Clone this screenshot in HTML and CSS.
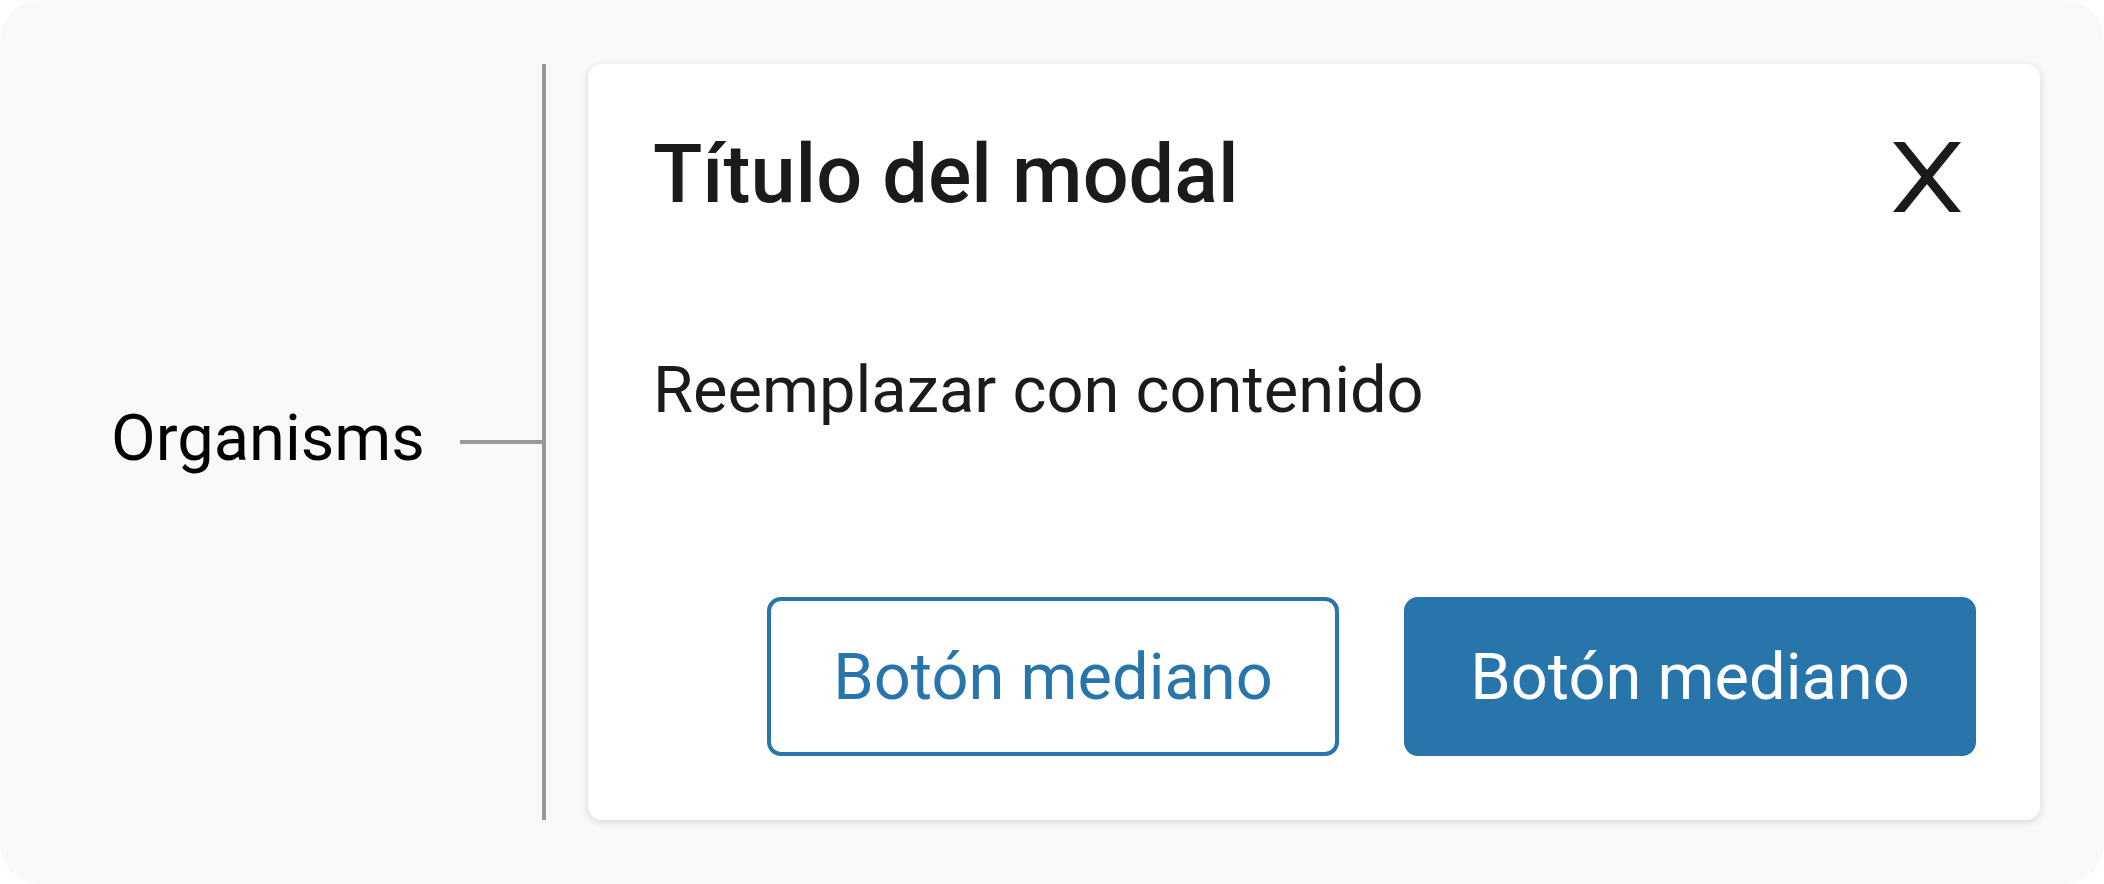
FILE: index.html
```html
<!DOCTYPE html>
<html lang="es">
<head>
	<meta charset="UTF-8">
	<title>Organisms - Modal</title>
	<link rel="stylesheet" href="styles.css">
</head>
<body>
	<div class="panel">
		<div class="label">Organisms</div>
		<div class="connector"></div>
		<div class="rail"></div>

		<div class="modal">
			<div class="modal-header">
				<h1 class="modal-title">Título del modal</h1>
				<button class="modal-close" type="button" aria-label="Cerrar">
					<svg width="68" height="70" viewBox="0 0 68 70">
						<polygon points="0,0 11.5,0 68,70 56.5,70" fill="#1b1b1b"/>
						<polygon points="56.5,0 68,0 11.5,70 0,70" fill="#1b1b1b"/>
					</svg>
				</button>
			</div>

			<p class="modal-body">Reemplazar con contenido</p>

			<div class="modal-footer">
				<button class="btn btn-outline" type="button">Botón mediano</button>
				<button class="btn btn-solid" type="button">Botón mediano</button>
			</div>
		</div>
	</div>
</body>
</html>
```

FILE: styles.css
```css
html, body {
	margin: 0;
	padding: 0;
	background-color: #ffffff;
}

body {
	font-family: Roboto, "Liberation Sans", sans-serif;
}

.panel {
	width: 2104px;
	height: 884px;
	box-sizing: border-box;
	padding: 64px 64px 64px 111px;
	background-color: #f9f9f9;
	border-radius: 40px;
	display: flex;
	align-items: center;
}

.label {
	width: 313px;
	margin-right: 36px;
	font-size: 65px;
	line-height: 76px;
	color: #000000;
	margin-top: -9px;
}

.connector {
	width: 82px;
	height: 4px;
	background-color: #999999;
}

.rail {
	width: 4px;
	height: 756px;
	background-color: #999999;
	margin-right: 42px;
}

.modal {
	flex: 1;
	height: 756px;
	box-sizing: border-box;
	padding: 64px 64px 64px 65px;
	background-color: #ffffff;
	border-radius: 14px;
	box-shadow: 0 2px 8px rgba(0, 0, 0, 0.14);
	display: flex;
	flex-direction: column;
}

.modal-header {
	display: flex;
	align-items: center;
	justify-content: space-between;
}

.modal-title {
	margin: 0;
	font-size: 81px;
	font-weight: 500;
	line-height: 94px;
	color: #1b1b1b;
}

.modal-close {
	border: none;
	background: none;
	padding: 0;
	margin-right: 15px;
	margin-top: 4px;
	display: flex;
}

.modal-body {
	margin: 130px 0 0;
	font-size: 65px;
	line-height: 76px;
	color: #1b1b1b;
}

.modal-footer {
	margin-top: auto;
	display: flex;
	justify-content: flex-end;
	gap: 65px;
}

.btn {
	width: 572px;
	height: 159px;
	box-sizing: border-box;
	border-radius: 14px;
	font-family: Roboto, "Liberation Sans", sans-serif;
	font-size: 65px;
	line-height: 76px;
	padding: 0;
}

.btn-outline {
	background-color: #ffffff;
	border: 4px solid #2775aa;
	color: #2775aa;
}

.btn-solid {
	background-color: #2775aa;
	border: 4px solid #2775aa;
	color: #ffffff;
}
```
